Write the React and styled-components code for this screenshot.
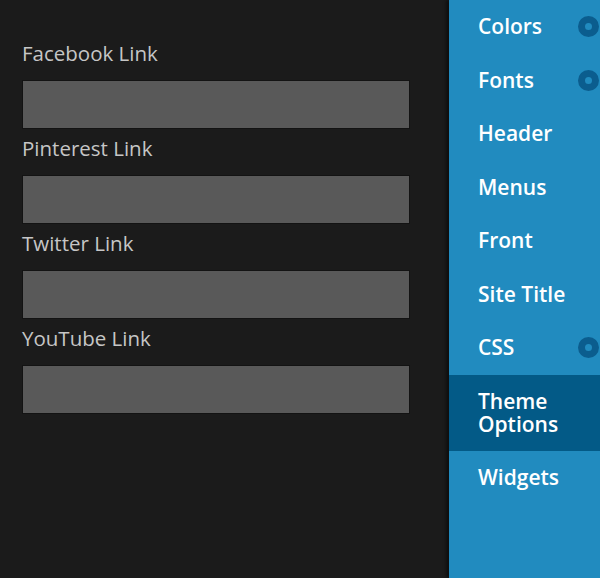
import styled, { createGlobalStyle } from "styled-components";

const GlobalStyle = createGlobalStyle`
  html, body, #root {
    margin: 0;
    height: 100%;
  }
  body {
    background: #1b1b1b;
    font-family: "Open Sans", "DejaVu Sans", sans-serif;
  }
`;

const fields = ["Facebook Link", "Pinterest Link", "Twitter Link", "YouTube Link"];

const menu = [
  { label: "Colors", dot: true },
  { label: "Fonts", dot: true },
  { label: "Header" },
  { label: "Menus" },
  { label: "Front" },
  { label: "Site Title" },
  { label: "CSS", dot: true },
  { label: "Theme Options", active: true },
  { label: "Widgets" },
];

const App = () => {
  return (
    <>
      <GlobalStyle />
      <Layout>
        <Panel>
          {fields.map((f) => (
            <Field key={f}>
              <Label>{f}</Label>
              <Input type="text" />
            </Field>
          ))}
        </Panel>
        <Sidebar>
          {menu.map((m) => (
            <Item key={m.label} $active={m.active}>
              <ItemText>
                {m.label === "Theme Options" ? (
                  <>
                    Theme
                    <br />
                    Options
                  </>
                ) : (
                  m.label
                )}
              </ItemText>
              {m.dot && <Dot />}
            </Item>
          ))}
        </Sidebar>
      </Layout>
    </>
  );
};

export default App;

const Layout = styled.div`
  display: flex;
  height: 100%;
  overflow: hidden;
`;

const Panel = styled.div`
  flex: 1;
  padding: 38px 0 0 22px;
  background: #1b1b1b;
`;

const Field = styled.div`
  display: flex;
  flex-direction: column;
  width: 388px;
  margin-bottom: 4px;
`;

const Label = styled.label`
  font-size: 20.5px;
  line-height: 30px;
  color: #c6c6c6;
  margin-bottom: 12px;
`;

const Input = styled.input`
  box-sizing: border-box;
  height: 49px;
  width: 100%;
  margin: 0;
  background: #595959;
  border: 1px solid #131313;
  outline: none;
  color: #eee;
  font-family: inherit;
  font-size: 16px;
  padding: 0 10px;
`;

const Sidebar = styled.nav`
  width: 151px;
  flex-shrink: 0;
  background: #218bbf;
  box-shadow: -3px 0 3px rgba(0, 0, 0, 0.45);
`;

const Item = styled.div`
  display: flex;
  align-items: center;
  justify-content: space-between;
  padding: 15.25px 1px 15.25px 29px;
  background: ${(p) => (p.$active ? "#035a87" : "transparent")};
`;

const ItemText = styled.span`
  font-size: 21px;
  line-height: 23px;
  font-weight: 600;
  color: #ffffff;
`;

const Dot = styled.span`
  box-sizing: border-box;
  width: 21px;
  height: 21px;
  border-radius: 50%;
  border: 7px solid #0b5d8e;
`;
